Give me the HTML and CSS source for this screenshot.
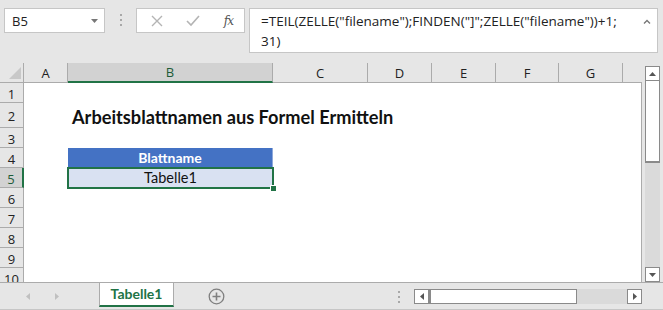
FILE: index.html
```html
<!DOCTYPE html>
<html lang="de">
<head>
    <meta charset="UTF-8">
    <title>Tabelle1</title>
    <link rel="stylesheet" href="styles.css">
</head>
<body>
    <div class="toolbar">
        <div class="namebox">
            <span>B5</span>
            <svg class="dd" width="7" height="4" viewBox="0 0 7 4"><path d="M0 0h7L3.5 4z" fill="#777"/></svg>
        </div>
        <div class="sep"><i></i><i></i><i></i></div>
        <div class="fxbtns">
            <svg width="12" height="12" viewBox="0 0 12 12"><path d="M1 1l10 10M11 1L1 11" stroke="#b4b4b4" stroke-width="1.4"/></svg>
            <svg width="14" height="12" viewBox="0 0 14 12"><path d="M1 6l4 4 8-9" stroke="#b4b4b4" stroke-width="1.6" fill="none"/></svg>
            <span class="fx">fx</span>
        </div>
        <div class="formula">
            <div class="ftext">=TEIL(ZELLE("filename");FINDEN("]";ZELLE("filename"))+1;<br>31)</div>
            <svg class="caret" width="8" height="5" viewBox="0 0 8 5"><path d="M1 4.5l3-3 3 3" stroke="#777" stroke-width="1.4" fill="none"/></svg>
        </div>
    </div>

    <div class="sheet">
        <div class="grid">
            <div class="colhead">
                <div class="corner"><svg width="12" height="12" viewBox="0 0 12 12"><path d="M12 0v12H0z" fill="#c8c8c8"/></svg></div>
                <div class="ch w-a">A</div>
                <div class="ch w-b active">B</div>
                <div class="ch w-c">C</div>
                <div class="ch w-d">D</div>
                <div class="ch w-e">E</div>
                <div class="ch w-f">F</div>
                <div class="ch w-g">G</div>
                <div class="ch last"></div>
            </div>
            <div class="body">
                <div class="row"><div class="rh">1</div><div class="cells"></div></div>
                <div class="row tall">
                    <div class="rh">2</div>
                    <div class="cells"><div class="w-a"></div><div class="title">Arbeitsblattnamen aus Formel Ermitteln</div></div>
                </div>
                <div class="row"><div class="rh">3</div><div class="cells"></div></div>
                <div class="row">
                    <div class="rh">4</div>
                    <div class="cells"><div class="w-a"></div><div class="w-b thead">Blattname</div></div>
                </div>
                <div class="row">
                    <div class="rh active">5</div>
                    <div class="cells"><div class="w-a"></div><div class="w-b tcell sel">Tabelle1</div></div>
                </div>
                <div class="row"><div class="rh">6</div><div class="cells"></div></div>
                <div class="row"><div class="rh">7</div><div class="cells"></div></div>
                <div class="row"><div class="rh">8</div><div class="cells"></div></div>
                <div class="row"><div class="rh">9</div><div class="cells"></div></div>
                <div class="row"><div class="rh">10</div><div class="cells"></div></div>
            </div>
        </div>
        <div class="vscroll">
            <div class="sbtn"><svg width="7" height="4" viewBox="0 0 7 4"><path d="M0 4h7L3.5 0z" fill="#555"/></svg></div>
            <div class="vthumb"></div>
            <div class="track"></div>
            <div class="sbtn"><svg width="7" height="4" viewBox="0 0 7 4"><path d="M0 0h7L3.5 4z" fill="#555"/></svg></div>
        </div>
    </div>

    <div class="tabbar">
        <div class="nav">
            <svg width="4" height="7" viewBox="0 0 4 7"><path d="M4 0v7L0 3.5z" fill="#c0c0c0"/></svg>
            <svg width="4" height="7" viewBox="0 0 4 7"><path d="M0 0v7l4-3.5z" fill="#c0c0c0"/></svg>
        </div>
        <div class="tab">Tabelle1</div>
        <div class="add">
            <svg width="17" height="17" viewBox="0 0 17 17"><circle cx="8.5" cy="8.5" r="7.3" fill="none" stroke="#7f7f7f" stroke-width="1.3"/><path d="M8.5 4.5v8M4.5 8.5h8" stroke="#7f7f7f" stroke-width="1.6"/></svg>
        </div>
        <div class="hsep"><i></i><i></i><i></i></div>
        <div class="hscroll">
            <div class="sbtn"><svg width="4" height="7" viewBox="0 0 4 7"><path d="M4 0v7L0 3.5z" fill="#555"/></svg></div>
            <div class="hthumb"></div>
            <div class="track"></div>
            <div class="sbtn"><svg width="4" height="7" viewBox="0 0 4 7"><path d="M0 0v7l4-3.5z" fill="#555"/></svg></div>
        </div>
    </div>
</body>
</html>
```

FILE: styles.css
```css
body {
    margin: 0;
    width: 663px;
    height: 310px;
    overflow: hidden;
    background: #e6e6e6;
    font-family: "Open Sans", "Noto Sans", sans-serif;
    color: #222;
}

/* formula bar */
.toolbar {
    display: flex;
    align-items: flex-start;
    height: 63px;
    padding: 8px 0 0 4px;
    box-sizing: border-box;
}

.namebox {
    width: 101px;
    height: 25px;
    box-sizing: border-box;
    background: #fff;
    border: 1px solid #c6c6c6;
    display: flex;
    align-items: center;
    justify-content: space-between;
    padding: 0 6px 0 7px;
    font-size: 13px;
}

.sep, .hsep {
    display: flex;
    flex-direction: column;
    align-items: center;
    gap: 3px;
}

.sep {
    width: 31px;
    padding-top: 6px;
}

.sep i, .hsep i {
    display: block;
    width: 2px;
    height: 2px;
    background: #a8a8a8;
}

.fxbtns {
    width: 109px;
    height: 25px;
    box-sizing: border-box;
    background: #fff;
    border: 1px solid #c6c6c6;
    display: flex;
    align-items: center;
    justify-content: space-between;
    padding: 0 11px 0 14px;
}

.fx {
    font-family: "DejaVu Serif", serif;
    font-style: italic;
    font-size: 12px;
    color: #555;
    letter-spacing: -1px;
}

.formula {
    width: 409px;
    height: 45px;
    margin-left: 4px;
    box-sizing: border-box;
    background: #fff;
    border: 1px solid #c6c6c6;
    display: flex;
    justify-content: space-between;
    align-items: flex-start;
    padding: 2px 6px 0 11px;
}

.ftext {
    font-size: 13.5px;
    line-height: 20px;
}

.caret {
    margin-top: 8px;
}

/* sheet */
.sheet {
    display: flex;
    height: 219px;
}

.grid {
    width: 642px;
    overflow: hidden;
}

.colhead {
    display: flex;
    height: 20px;
    font-size: 13px;
}

.corner, .ch, .rh {
    box-sizing: border-box;
    background: #e6e6e6;
    border-right: 1px solid #ababab;
    border-bottom: 1px solid #ababab;
    display: flex;
    align-items: center;
    justify-content: center;
}

.corner {
    width: 24px;
    justify-content: flex-end;
    align-items: flex-end;
    padding: 0 2px 3px 0;
}

.ch.last {
    flex: 1;
    border-right: none;
}

.ch.active {
    background: #d2d2d2;
    border-bottom: 2px solid #217346;
    color: #1e5c38;
}

.w-a { width: 44px; flex: none; }
.w-b { width: 205px; flex: none; }
.w-c { width: 95px; }
.w-d { width: 64px; }
.w-e { width: 64px; }
.w-f { width: 63px; }
.w-g { width: 64px; }

.body {
    border-right: 1px solid #ababab;
}

.row {
    display: flex;
    height: 20px;
}

.row.tall {
    height: 25px;
}

.rh {
    width: 24px;
    flex: none;
    font-size: 13px;
    padding-top: 2px;
}

.rh.active {
    background: #d2d2d2;
    border-right: 2px solid #217346;
    color: #1e5c38;
}

.cells {
    flex: 1;
    display: flex;
    background: #fff;
    font-family: Lato, "Open Sans", sans-serif;
}

.title {
    white-space: nowrap;
    font-weight: bold;
    font-size: 18.2px;
    padding: 3px 0 0 4px;
    color: #111;
}

.thead {
    background: #4472c4;
    color: #fff;
    font-weight: bold;
    font-size: 14px;
    text-align: center;
    line-height: 20px;
    border-right: 1px solid #8ea9db;
    box-sizing: border-box;
}

.tcell {
    background: #d9e1f2;
    font-size: 14.5px;
    text-align: center;
    line-height: 20px;
    color: #111;
}

.sel {
    position: relative;
    outline: 2px solid #217346;
    outline-offset: -1px;
}

.sel::after {
    content: "";
    position: absolute;
    right: -3px;
    bottom: -3px;
    width: 5px;
    height: 5px;
    background: #217346;
    border-left: 1px solid #fff;
    border-top: 1px solid #fff;
}

/* scrollbars */
.vscroll {
    width: 15px;
    margin: 3px 0 0 3px;
    display: flex;
    flex-direction: column;
}

.sbtn {
    box-sizing: border-box;
    width: 15px;
    height: 15px;
    background: #fff;
    border: 1px solid #8a8a8a;
    display: flex;
    align-items: center;
    justify-content: center;
    flex: none;
}

.vthumb {
    height: 82px;
    background: #fff;
    border: 1px solid #8a8a8a;
    border-top: none;
    border-bottom-width: 2px;
    box-sizing: border-box;
}

.track {
    flex: 1;
    background: #dadada;
}

.tabbar {
    display: flex;
    align-items: flex-start;
    height: 26px;
    border-top: 1px solid #ababab;
    border-bottom: 1px solid #c6c6c6;
}

.nav {
    width: 99px;
    display: flex;
    gap: 25px;
    padding: 10px 0 0 26px;
    box-sizing: border-box;
}

.tab {
    width: 75px;
    height: 24px;
    box-sizing: border-box;
    background: #fff;
    border: 1px solid #ababab;
    border-top: none;
    border-bottom: 2px solid #217346;
    color: #217346;
    font-family: Lato, "Open Sans", sans-serif;
    font-weight: bold;
    font-size: 14px;
    text-align: center;
    line-height: 22px;
}

.add {
    width: 84px;
    padding: 5px 0 0 34px;
    box-sizing: border-box;
}

.hsep {
    width: 16px;
    padding: 8px 0 0 0;
    margin-left: 140px;
    align-items: flex-start;
}

.hscroll {
    width: 228px;
    margin-top: 6px;
    display: flex;
    height: 15px;
}

.hthumb {
    width: 148px;
    background: #fff;
    border: 1px solid #8a8a8a;
    border-left-width: 2px;
    box-sizing: border-box;
}
```
